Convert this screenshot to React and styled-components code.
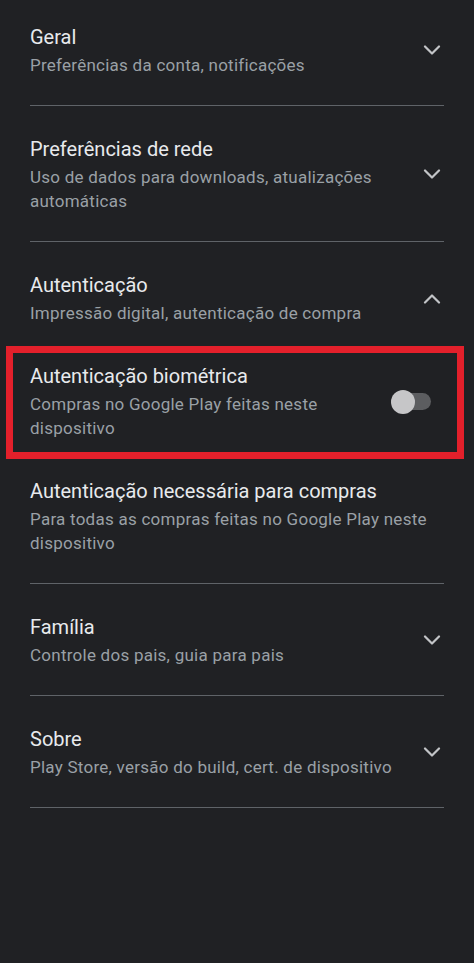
import React from "react";
import styled, { createGlobalStyle } from "styled-components";

const Global = createGlobalStyle`
  html, body { margin: 0; padding: 0; background: #202124; }
  body { font-family: Roboto, "Noto Sans", sans-serif; -webkit-font-smoothing: antialiased; }
`;

const Page = styled.div`
  min-height: 963px;
  background: #202124;
  padding: 0 30px;
  box-sizing: border-box;
`;

const Section = styled.section`
  padding: 30px 0 9px;
  border-bottom: 1px solid #5f6368;
  &:first-child { padding-top: 24px; }
`;

const Row = styled.div`
  position: relative;
  display: flex;
  align-items: center;
  gap: 16px;
  padding: ${(p) => (p.$header ? "0 0 19px" : "19px 0")};
  ${(p) =>
    p.$highlight &&
    `
    &::after {
      content: "";
      position: absolute;
      top: 2px;
      bottom: 0;
      left: -24px;
      right: -20px;
      border: 7px solid #e3202b;
      pointer-events: none;
    }
  `}
`;

const Text = styled.div`
  flex: 1;
  min-width: 0;
`;

const Title = styled.div`
  color: #e8eaed;
  font-size: 20px;
  line-height: 26px;
`;

const Subtitle = styled.div`
  color: #9aa0a6;
  font-size: 17px;
  letter-spacing: 0.25px;
  line-height: 24px;
  margin-top: 3px;
  max-width: ${(p) => p.$max || "none"};
`;

const IconBox = styled.div`
  width: 24px;
  display: flex;
  justify-content: center;
  flex-shrink: 0;
`;

const Track = styled.div`
  position: relative;
  width: 36px;
  height: 17px;
  border-radius: 9px;
  background: #5c5d60;
  margin-right: 13px;
  flex-shrink: 0;
`;

const Knob = styled.div`
  position: absolute;
  left: -4px;
  top: 50%;
  width: 24px;
  height: 24px;
  margin-top: -12px;
  border-radius: 50%;
  background: #c6c6c8;
`;

const Chevron = ({ up }) => (
  <svg width="18" height="11" viewBox="0 0 18 11" fill="none">
    <polyline
      points={up ? "2,9.5 9,2.5 16,9.5" : "2,1.5 9,8.5 16,1.5"}
      stroke="#c2c4c7"
      strokeWidth="2.2"
      strokeLinecap="round"
      strokeLinejoin="round"
    />
  </svg>
);

const sections = [
  { title: "Geral", sub: "Preferências da conta, notificações" },
  {
    title: "Preferências de rede",
    sub: "Uso de dados para downloads, atualizações automáticas",
    max: "360px",
  },
  {
    title: "Autenticação",
    sub: "Impressão digital, autenticação de compra",
    open: true,
  },
  { title: "Família", sub: "Controle dos pais, guia para pais" },
  { title: "Sobre", sub: "Play Store, versão do build, cert. de dispositivo" },
];

export default function App() {
  return (
    <Page>
      <Global />
      {sections.map((s) => (
        <Section key={s.title}>
          <Row $header>
            <Text>
              <Title>{s.title}</Title>
              <Subtitle $max={s.max}>{s.sub}</Subtitle>
            </Text>
            <IconBox>
              <Chevron up={s.open} />
            </IconBox>
          </Row>
          {s.open && (
            <>
              <Row $highlight>
                <Text>
                  <Title>Autenticação biométrica</Title>
                  <Subtitle $max="320px">
                    Compras no Google Play feitas neste dispositivo
                  </Subtitle>
                </Text>
                <Track>
                  <Knob />
                </Track>
              </Row>
              <Row>
                <Text>
                  <Title>Autenticação necessária para compras</Title>
                  <Subtitle>
                    Para todas as compras feitas no Google Play neste dispositivo
                  </Subtitle>
                </Text>
              </Row>
            </>
          )}
        </Section>
      ))}
    </Page>
  );
}
